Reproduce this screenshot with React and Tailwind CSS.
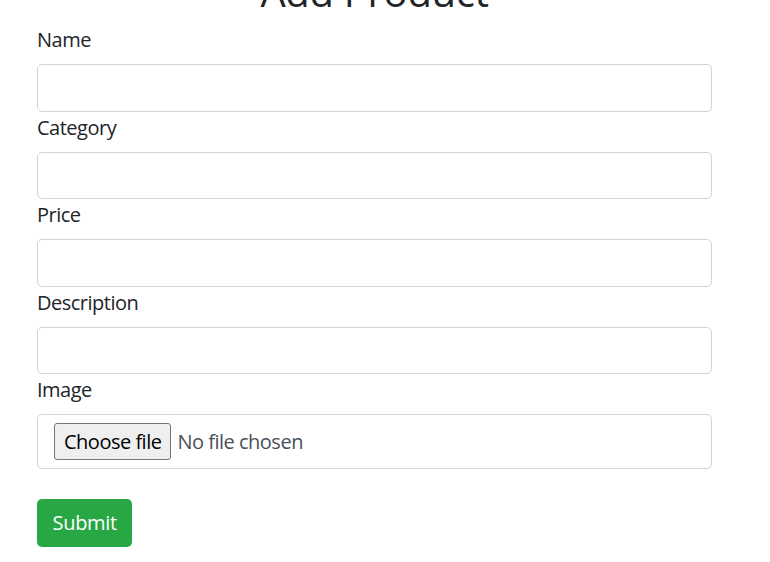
const fields = ['Name', 'Category', 'Price', 'Description']

function Field({ label }) {
  return (
    <div className="flex flex-col">
      <label className="mb-[10px] h-[30px] text-[20px] leading-[32px] tracking-[-0.5px] text-[#212529]">{label}</label>
      <input
        type="text"
        className="h-[47.5px] w-full rounded-[5px] border border-[#ced4da] bg-white px-[15px] text-[20px] outline-none"
      />
    </div>
  )
}

export default function App() {
  return (
    <div
      className="min-h-[562px] bg-white"
      style={{ fontFamily: '"Open Sans", "Noto Sans", sans-serif' }}
    >
      <div className="mx-[37px] mt-[-38px] w-[675px]">
        <h1 className="mb-[2px] h-[60px] text-center text-[40px] font-medium leading-[60px] tracking-[-0.3px] text-[#212529]">
          Add Product
        </h1>
        <form className="flex flex-col">
          {fields.map((f) => (
            <Field key={f} label={f} />
          ))}
          <div className="flex flex-col">
            <label className="mb-[10px] h-[30px] text-[20px] leading-[32px] tracking-[-0.5px] text-[#212529]">Image</label>
            <div className="flex h-[55px] items-center rounded-[5px] border border-[#ced4da] px-[16px] tracking-[-0.5px]">
              <span className="flex h-[37px] items-center rounded-[3px] border border-[#767676] bg-[#efefef] px-[9px] text-[20px] text-black">
                Choose file
              </span>
              <span className="ml-[6px] text-[20px] text-[#495057]">No file chosen</span>
            </div>
          </div>
          <div className="mt-[30px]">
            <button
              type="button"
              className="h-[47.5px] rounded-[5px] bg-[#28a745] px-[15.5px] text-[20px] tracking-[-0.3px] text-white"
            >
              Submit
            </button>
          </div>
        </form>
      </div>
    </div>
  )
}
